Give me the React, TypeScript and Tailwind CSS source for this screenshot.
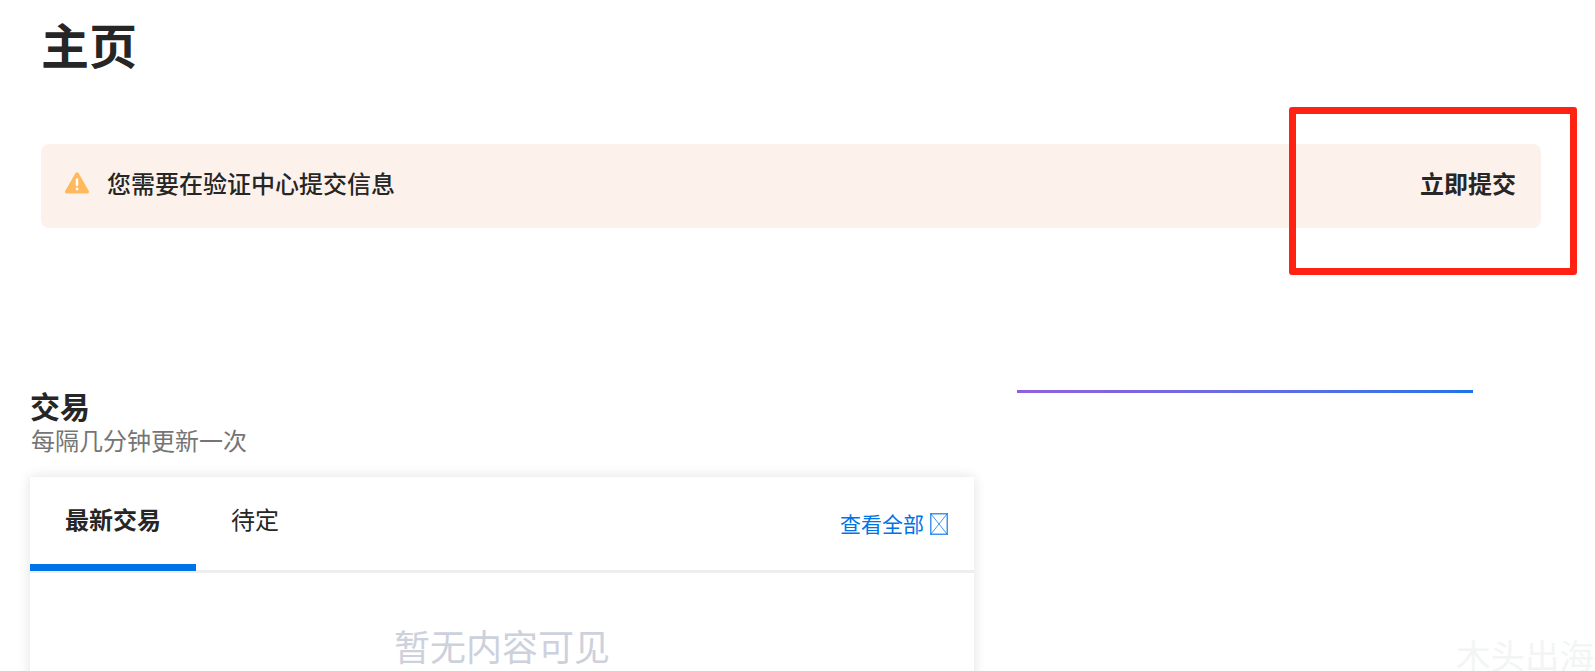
import React from "react";

function WarningIcon() {
  return (
    <svg width="24" height="22" viewBox="0.5 1 23 21" className="shrink-0">
      <path
        d="M12 1.2c.6 0 1.1.3 1.4.8l9.9 17.2c.6 1-.1 2.3-1.4 2.3H2.100c-1.300 0-2-1.300-1.400-2.300L10.600 2c.3-.5.8-.8 1.400-.8z"
        fill="#FFB85C"
      />
      <rect x="10.800" y="7" width="2.400" height="7.500" rx="1" fill="#fff" />
      <circle cx="12" cy="17.300" r="1.400" fill="#fff" />
    </svg>
  );
}

// missing-glyph box that follows the link in the screenshot
function TofuBox() {
  return (
    <svg width="18" height="22" viewBox="0 0 18 22" className="shrink-0" fill="none" stroke="#0073E6" strokeOpacity="0.75">
      <rect x="0.750" y="0.750" width="16.500" height="20.500" strokeWidth="1.500" />
      <path d="M1 1l16 20M17 1L1 21" />
    </svg>
  );
}

export default function App() {
  return (
    <div className="relative h-screen overflow-hidden bg-white text-[#262626] font-['Noto_Sans_CJK_SC',sans-serif]">
      <h1 className="pl-[41px] pt-[9px] text-[48px] leading-[68px] font-bold">主页</h1>

      {/* Alert */}
      <div className="mt-[67px] ml-[41px] flex h-[84px] w-[1500px] items-center justify-between rounded-lg bg-[#FDF2EB] pb-[7px] pl-[24px] pr-[25px]">
        <div className="flex items-center gap-[18px]">
          <WarningIcon />
          <span className="text-[24px] font-medium">您需要在验证中心提交信息</span>
        </div>
        <span className="text-[24px] font-bold">立即提交</span>
      </div>

      <div className="mt-[162px] flex items-start">
        {/* Transactions */}
        <section className="ml-[30px] w-[944px]">
          <h2 className="-mt-[3px] text-[30px] leading-[36px] font-bold">交易</h2>
          <p className="pl-px text-[24px] leading-[34px] text-[#757575]">每隔几分钟更新一次</p>

          <div className="mt-[20px] bg-white shadow-[0_0_12px_rgba(0,0,0,0.12)]">
            <div className="flex h-[96px] items-stretch justify-between border-b-[3px] border-[#EEEEEE]">
              <div className="flex">
                <div className="-mb-px flex w-[166px] items-center justify-center border-b-[7px] border-[#0073E6] pb-[3px] text-[24px] font-bold">
                  最新交易
                </div>
                <div className="flex items-center pl-[35px] pb-[10px] text-[24px]">待定</div>
              </div>
              <div className="flex items-center gap-[6px] pr-[26px] text-[21px] text-[#0073E6]">
                <span>查看全部</span>
                <TofuBox />
              </div>
            </div>
            <div className="flex h-[300px] justify-center pt-[45px] text-[36px] leading-[54px] text-[#CDD1DC]">
              暂无内容可见
            </div>
          </div>
        </section>

        {/* Gradient rule */}
        <div className="ml-[43px] h-[3px] w-[456px] bg-gradient-to-r from-[#9060DD] to-[#1A73E8]" />
      </div>

      {/* Annotation box drawn over the screenshot */}
      <div className="absolute left-[1289px] top-[107px] h-[168px] w-[288px] rounded-[3px] border-[7px] border-[#FF2213]" />

      {/* Watermark */}
      <div className="absolute left-[1456px] top-[630px] whitespace-nowrap text-[34.5px] leading-[48px] text-[#F3F5F5]">
        木头出海
      </div>
    </div>
  );
}
